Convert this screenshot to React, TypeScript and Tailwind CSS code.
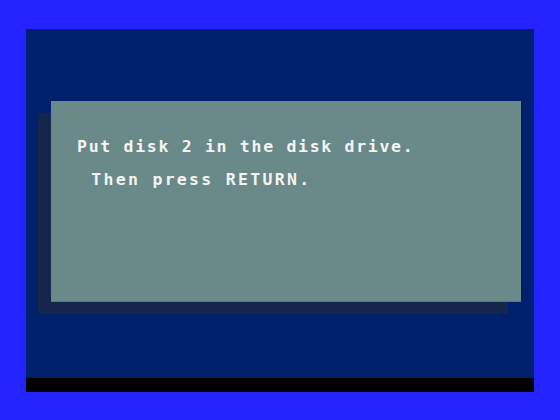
const App = () => {
  return (
    <div className="w-[560px] h-[420px] bg-[#2323ff] pt-[29px] px-[26px] pb-[28px] flex flex-col">
      <div className="flex-1 bg-[#00206c] pt-[72px] pl-[25px]">
        {/* disk prompt dialog */}
        <div className="w-[470px] h-[201px] bg-[#698a88] border-b border-[#5a7876] shadow-[-13px_12px_0_#15264c] pt-[29px] pl-[26px] text-[#f4f4f4] font-['DejaVu_Sans_Mono',monospace] font-bold text-[16.5px] leading-[33px] whitespace-pre">
          <div className="tracking-[1.7px]">Put disk 2 in the disk drive.</div>
          <div className="tracking-[2.3px] pl-[2px]"> Then press RETURN.</div>
        </div>
      </div>
      <div className="h-[14px] bg-black" />
    </div>
  );
};

export default App;
